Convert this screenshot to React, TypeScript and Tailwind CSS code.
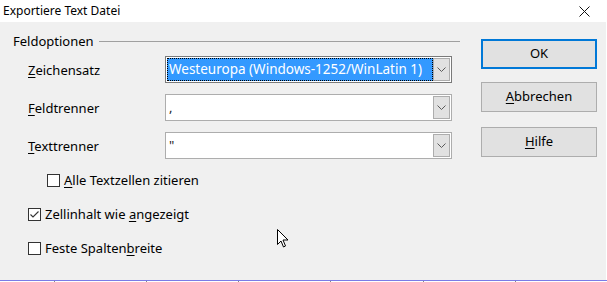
import React from "react";

const font = { fontFamily: '"Noto Sans", "Segoe UI", sans-serif' };

function U({ c }: { c: string }) {
  return <span className="underline underline-offset-[2px] decoration-[1px]">{c}</span>;
}

function Chevron() {
  return (
    <svg width="9" height="5" viewBox="0 0 9 5">
      <path d="M0.5 0.5 L4.5 4.5 L8.5 0.5" fill="none" stroke="#5a5a5a" strokeWidth="1" />
    </svg>
  );
}

function Combo({ value, focused }: { value: string; focused?: boolean }) {
  return (
    <div
      className={`w-[287px] h-[27px] bg-white border flex items-stretch p-[1px] ${
        focused ? "border-[#7a7a7a]" : "border-[#adadad]"
      }`}
    >
      {focused ? (
        <div className="flex-1 bg-[#3399ff] text-white border border-dotted border-black flex items-center pl-[1px] text-[13.5px] leading-none">
          {value}
        </div>
      ) : (
        <div className="flex-1 flex items-center pl-[2px] text-[13px] leading-none text-[#222]">{value}</div>
      )}
      <div className="w-[17px] bg-[#e1e1e1] border border-[#adadad] flex items-center justify-center">
        <Chevron />
      </div>
    </div>
  );
}

function CheckBox({ checked }: { checked?: boolean }) {
  return (
    <div className="w-[13px] h-[13px] border border-[#333] bg-white flex items-center justify-center">
      {checked && (
        <svg width="11" height="11" viewBox="0 0 11 11">
          <path d="M1.5 5.5 L4 8 L9.5 2.5" fill="none" stroke="#333" strokeWidth="1.1" />
        </svg>
      )}
    </div>
  );
}

export default function App() {
  return (
    <div className="w-[607px] h-[282px] bg-white relative overflow-hidden text-black" style={font}>
      {/* Title bar */}
      <div className="h-[22px] flex items-center justify-between pl-[3px] pr-[17px]">
        <span className="text-[12px] leading-none">Exportiere Text Datei</span>
        <svg width="11" height="11" viewBox="0 0 11 11">
          <path d="M0.5 0.5 L10.5 10.5 M10.5 0.5 L0.5 10.5" stroke="#111" strokeWidth="1" />
        </svg>
      </div>

      {/* Body */}
      <div className="w-[606px] h-[258px] bg-[#f0f0f0] flex text-[13px]">
        {/* Left */}
        <div className="w-[460px] pl-[13px] pt-[11px]">
          <div className="flex items-center h-[16px]">
            <span className="leading-none">Feldoptionen</span>
            <div className="flex-1 h-px bg-[#a0a0a0] ml-[5px]" />
          </div>

          <div className="mt-[7px] flex flex-col gap-[11px] pl-[15px]">
            <div className="flex items-center">
              <div className="w-[137px] pt-[2px]">
                <U c="Z" />eichensatz
              </div>
              <Combo value="Westeuropa (Windows-1252/WinLatin 1)" focused />
            </div>
            <div className="flex items-center">
              <div className="w-[137px] pt-[3px]">
                <U c="F" />eldtrenner
              </div>
              <Combo value="," />
            </div>
            <div className="flex items-center">
              <div className="w-[137px] pt-[3px]">
                <U c="T" />exttrenner
              </div>
              <Combo value={'"'} />
            </div>
          </div>

          <div className="mt-[15px] flex flex-col gap-[21px] pl-[15px]">
            <div className="flex items-center gap-[4px] pl-[19px] h-[13px]">
              <CheckBox />
              <span className="pt-[1px]">
                <U c="A" />lle Textzellen zitieren
              </span>
            </div>
            <div className="flex items-center gap-[4px] h-[13px]">
              <CheckBox checked />
              <span className="pt-[1px]">
                Zellinhalt wie <U c="a" />ngezeigt
              </span>
            </div>
            <div className="flex items-center gap-[4px] h-[13px]">
              <CheckBox />
              <span className="pt-[1px]">
                Feste Spalten<U c="b" />reite
              </span>
            </div>
          </div>
        </div>

        {/* Right buttons */}
        <div className="pl-[21px] pt-[17px] flex flex-col">
          <div className="w-[116px] h-[30px] bg-[#e1e1e1] border-2 border-[#0078d7] flex items-center justify-center">
            OK
          </div>
          <div className="mt-[13px] w-[116px] h-[30px] bg-[#e1e1e1] border border-[#adadad] flex items-center justify-center">
            <span>
              <U c="A" />bbrechen
            </span>
          </div>
          <div className="mt-[15px] w-[116px] h-[30px] bg-[#e1e1e1] border border-[#adadad] flex items-center justify-center">
            <span>
              <U c="H" />ilfe
            </span>
          </div>
        </div>
      </div>

      {/* Bottom strip */}
      <div className="h-px bg-[#7b7be6]" />
      <div className="h-px flex">
        <div className="w-[58px]" />
        {[0, 1, 2, 3, 4, 5].map((i) => (
          <div key={i} className="w-[100px] flex">
            <div className="w-px h-px bg-[#888]" />
          </div>
        ))}
      </div>

      {/* Mouse cursor */}
      <svg className="absolute left-[277px] top-[229px]" width="13" height="20" viewBox="0 0 13 20">
        <path
          d="M0.5 0.5 L0.5 15.5 L4 12 L6.5 18 L8.5 17 L6 11 L11 11 Z"
          fill="#fff"
          stroke="#000"
          strokeWidth="1"
        />
      </svg>
    </div>
  );
}
